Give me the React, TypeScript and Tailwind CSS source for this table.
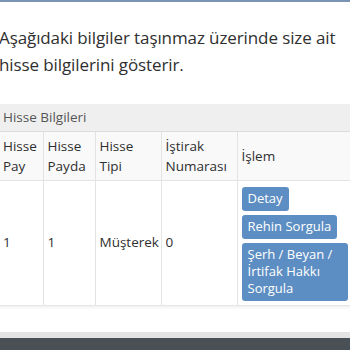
import React from 'react';

const headers = [
  { label: ['Hisse', 'Pay'], w: 'w-[44px]' },
  { label: ['Hisse', 'Payda'], w: 'w-[52px]' },
  { label: ['Hisse', 'Tipi'], w: 'w-[66px]' },
  { label: ['İştirak', 'Numarası'], w: 'w-[76px]' },
  { label: ['İşlem'], w: '' },
];

const actions = ['Detay', 'Rehin Sorgula', 'Şerh / Beyan / İrtifak Hakkı Sorgula'];

const App: React.FC = () => {
  return (
    <div className="w-[350px] h-[350px] overflow-hidden bg-white flex flex-col text-[#2f2f2f]" style={{ fontFamily: '"Open Sans", sans-serif' }}>
      <div className="h-[2px] bg-[#7a93b3] shrink-0" />
      <p className="-ml-[1px] pt-[22px] text-[17px] leading-[27px] tracking-[-0.1px] shrink-0">
        Aşağıdaki bilgiler taşınmaz üzerinde size ait hisse bilgilerini gösterir.
      </p>
      <div className="mt-[26px] -ml-[1px] w-[352px] shrink-0 border-b border-[#e6e6e6] shadow-[0_2px_3px_rgba(0,0,0,0.06)]">
        <div className="h-[28px] bg-[#efefef] border-b border-[#dcdcdc] px-[4px] flex items-center text-[13.5px] text-[#555]">
          Hisse Bilgileri
        </div>
        <table className="w-full table-fixed border-collapse text-[13.5px]">
          <thead>
            <tr className="bg-[#f9f9f9] border-b border-[#e3e3e3]">
              {headers.map((h, i) => (
                <th
                  key={i}
                  className={`${h.w} px-[4px] h-[48px] text-left font-normal leading-[20px] align-middle ${i < 4 ? 'border-r border-[#e3e3e3]' : ''}`}
                >
                  {h.label.map((l) => (
                    <div key={l}>{l}</div>
                  ))}
                </th>
              ))}
            </tr>
          </thead>
          <tbody>
            <tr className="bg-white">
              <td className="px-[4px] border-r border-[#e3e3e3] align-middle">1</td>
              <td className="px-[4px] border-r border-[#e3e3e3] align-middle">1</td>
              <td className="px-[4px] border-r border-[#e3e3e3] align-middle">Müşterek</td>
              <td className="px-[4px] border-r border-[#e3e3e3] align-middle">0</td>
              <td className="pl-[4px] pr-[3px] pt-[6px] pb-[4px] align-top">
                <div className="flex flex-col items-start gap-[4px]">
                  {actions.map((a) => (
                    <button
                      key={a}
                      className="bg-[#5d8ec3] text-white text-[13px] leading-[17px] text-left rounded-[3px] px-[6px] py-[3.5px]"
                    >
                      {a}
                    </button>
                  ))}
                </div>
              </td>
            </tr>
          </tbody>
        </table>
      </div>
      <div className="flex-1" />
      <div className="h-[6px] bg-[#e4e4e4] shrink-0" />
      <div className="h-[12px] bg-[#4a5156] shrink-0" />
    </div>
  );
};

export default App;
